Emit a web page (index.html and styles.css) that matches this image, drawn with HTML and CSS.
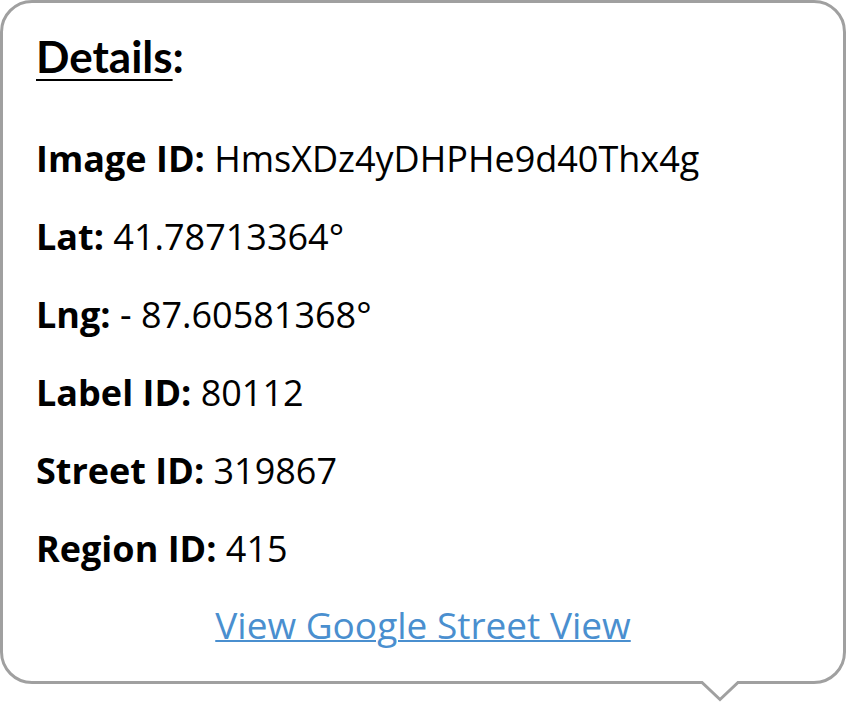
FILE: index.html
```html
<!DOCTYPE html>
<html lang="en">
  <head>
    <meta charset="UTF-8">
    <title>Label Details</title>
    <link rel="stylesheet" href="styles.css">
  </head>
  <body>
    <div class="card">
      <h3 class="title"><u>Details</u>:</h3>
      <div class="row"><b>Image ID:</b> HmsXDz4yDHPHe9d40Thx4g</div>
      <div class="row"><b>Lat:</b> 41.78713364°</div>
      <div class="row"><b>Lng:</b> - 87.60581368°</div>
      <div class="row"><b>Label ID:</b> 80112</div>
      <div class="row"><b>Street ID:</b> 319867</div>
      <div class="row"><b>Region ID:</b> 415</div>
      <div class="link-row">
        <a href="#" class="gsv-link">View Google Street View</a>
      </div>
      <!-- pointer under the card -->
      <svg class="pointer" width="44" height="24" viewBox="0 0 44 24">
        <polygon points="2,1 42,1 22,20" fill="#ffffff" />
        <polyline points="0,3.5 4,3.5 22,20.5 40,3.5 44,3.5" fill="none" stroke="#a0a0a0" stroke-width="3" />
      </svg>
    </div>
  </body>
</html>
```

FILE: styles.css
```css
body {
  margin: 0;
  padding-bottom: 18px;
  background-color: #ffffff;
  font-family: "Open Sans", "Liberation Sans", sans-serif;
}

.card {
  position: relative;
  box-sizing: border-box;
  width: 846px;
  height: 684px;
  padding: 27px 20px 0 33px;
  border: 3px solid #a0a0a0;
  border-radius: 32px;
  background-color: #ffffff;
}

.pointer {
  position: absolute;
  left: 695px;
  top: 676px;
}

.title {
  margin: 0 0 38px 0;
  font-family: "Lato", "Liberation Sans", sans-serif;
  font-size: 44px;
  font-weight: 700;
  color: #000000;
}

.title u {
  text-decoration-thickness: 2px;
  text-underline-offset: 6px;
}

.row {
  font-size: 36px;
  line-height: 78px;
  color: #000000;
  white-space: nowrap;
}

.row b {
  font-weight: 700;
}

.link-row {
  margin-left: -13px;
  text-align: center;
  font-size: 37px;
  line-height: 74px;
}

.gsv-link {
  color: #4a8fcf;
  text-decoration-thickness: 2px;
}
```
